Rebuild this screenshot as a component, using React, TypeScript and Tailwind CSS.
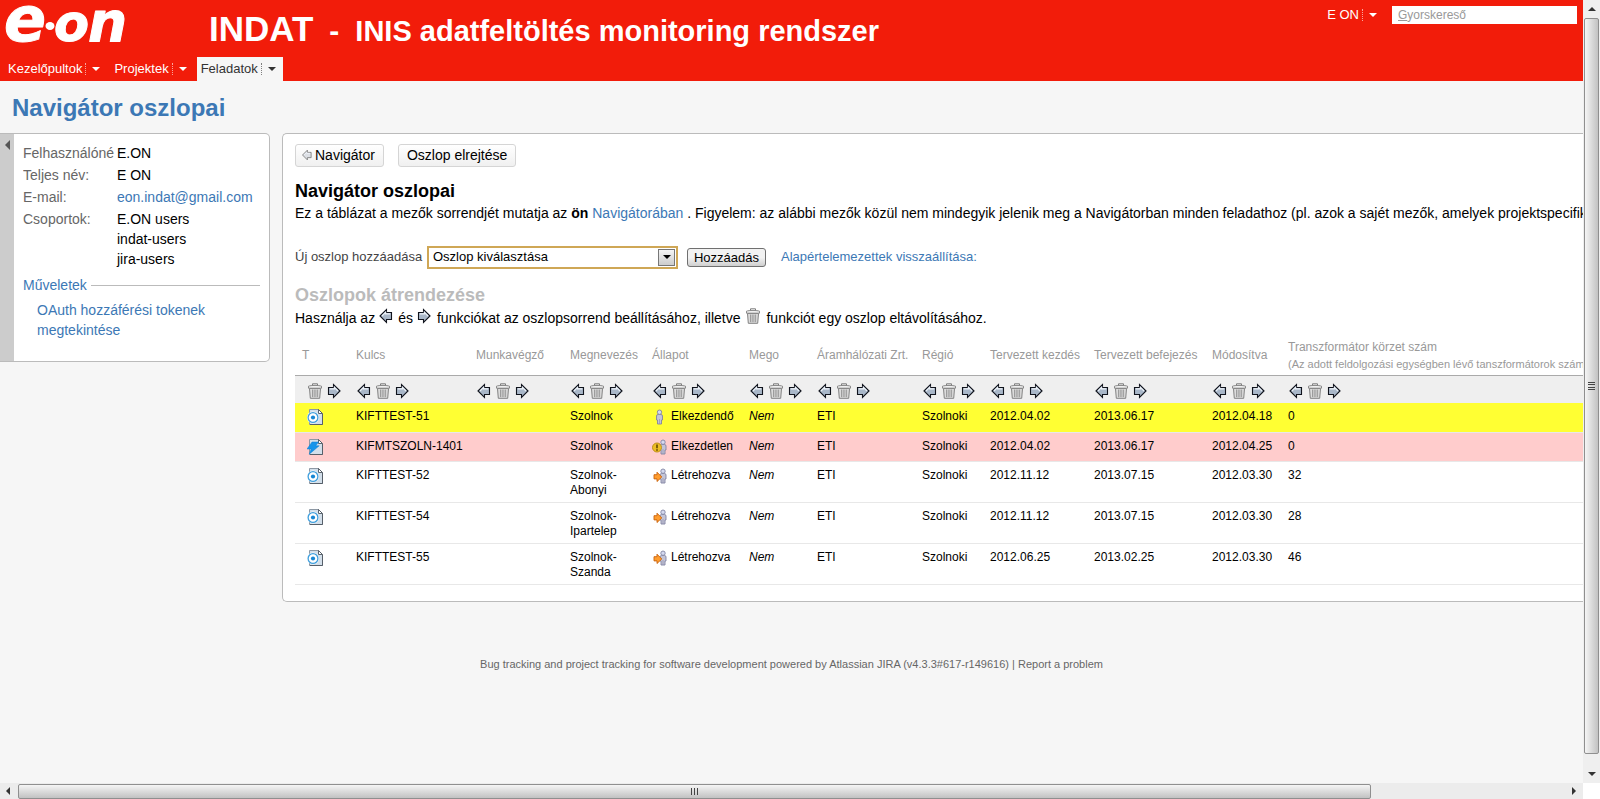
import type { ReactNode } from 'react';

interface Issue {
  key: string;
  type: 'task' | 'fault';
  name: string[];
  status: 'person' | 'warning' | 'created';
  statusLabel: string;
  start: string;
  end: string;
  modified: string;
  zones: number;
  rowClass: string;
}

const issues: Issue[] = [
  { key: 'KIFTTEST-51', type: 'task', name: ['Szolnok'], status: 'person', statusLabel: 'Elkezdendő', start: '2012.04.02', end: '2013.06.17', modified: '2012.04.18', zones: 0, rowClass: 'bg-[#ffff33]' },
  { key: 'KIFMTSZOLN-1401', type: 'fault', name: ['Szolnok'], status: 'warning', statusLabel: 'Elkezdetlen', start: '2012.04.02', end: '2013.06.17', modified: '2012.04.25', zones: 0, rowClass: 'bg-[#ffcccc]' },
  { key: 'KIFTTEST-52', type: 'task', name: ['Szolnok-', 'Abonyi'], status: 'created', statusLabel: 'Létrehozva', start: '2012.11.12', end: '2013.07.15', modified: '2012.03.30', zones: 32, rowClass: '' },
  { key: 'KIFTTEST-54', type: 'task', name: ['Szolnok-', 'Ipartelep'], status: 'created', statusLabel: 'Létrehozva', start: '2012.11.12', end: '2013.07.15', modified: '2012.03.30', zones: 28, rowClass: '' },
  { key: 'KIFTTEST-55', type: 'task', name: ['Szolnok-', 'Szanda'], status: 'created', statusLabel: 'Létrehozva', start: '2012.06.25', end: '2013.02.25', modified: '2012.03.30', zones: 46, rowClass: '' },
];

const columns = [
  { label: 'T', width: 'w-[54px]' },
  { label: 'Kulcs', width: 'w-[120px]' },
  { label: 'Munkavégző', width: 'w-[94px]' },
  { label: 'Megnevezés', width: 'w-[82px]' },
  { label: 'Állapot', width: 'w-[97px]' },
  { label: 'Mego', width: 'w-[68px]' },
  { label: 'Áramhálózati Zrt.', width: 'w-[105px]' },
  { label: 'Régió', width: 'w-[68px]' },
  { label: 'Tervezett kezdés', width: 'w-[104px]' },
  { label: 'Tervezett befejezés', width: 'w-[118px]' },
  { label: 'Módosítva', width: 'w-[76px]' },
  { label: 'Transzformátor körzet szám', width: '', note: '(Az adott feldolgozási egységben lévő tanszformátorok száma)' },
];

function ArrowIcon({ right = false, muted = false }: { right?: boolean; muted?: boolean }) {
  return (
    <svg viewBox="0 0 16 16" className={right ? 'inline-block size-4 -scale-x-100' : 'inline-block size-4'}>
      <path
        d="M2 8 8.5 1.5v3h5v7h-5v3Z"
        fill={muted ? '#dcdfe4' : '#a9b7c8'}
        stroke={muted ? '#777' : '#10131c'}
        strokeWidth="1.1"
      />
      <path d="M4 8 7.6 4.4v1.4h4.6" fill="none" stroke="#edf2f8" strokeWidth="1.2" />
    </svg>
  );
}

function TrashIcon() {
  return (
    <svg viewBox="0 0 16 16" className="inline-block size-4">
      <path d="M2.5 5.5h11l-.8 9.8H3.3Z" fill="#dcdcdc" stroke="#828282" />
      <path d="M5.5 6.5v7.6M7.2 6.5v7.6M8.9 6.5v7.6M10.6 6.5v7.6" stroke="#8c8c8c" strokeWidth=".8" />
      <path d="M1.5 3.2c2-1 11-1 13 0v2h-13Z" fill="#f0f0f0" stroke="#7d7d7d" strokeWidth=".9" />
      <path d="M5.5 2.3V.8h5v1.5" fill="none" stroke="#7d7d7d" />
    </svg>
  );
}

function TypeIcon({ type }: { type: Issue['type'] }) {
  return (
    <svg viewBox="0 0 16 16" className="block size-4">
      <path d="M2.5.5h9l4 4v11h-13Z" fill="#d3dfea" stroke="#8d98a4" />
      <path d="M11.5.5v4h4Z" fill="#fff" stroke="#4b545e" strokeWidth=".9" />
      <path d="M15.5 5v10.5H3" fill="none" stroke="#565f69" />
      {type === 'task' ? (
        <>
          <circle cx="6" cy="8.5" r="6" fill="#fff" />
          <circle cx="6" cy="8.5" r="4.9" fill="#fff" stroke="#3f9fdd" strokeWidth="1.3" />
          <circle cx="6" cy="8.5" r="2.1" fill="#1787d4" />
        </>
      ) : (
        <path d="M5 3h6.5L8.8 6.8h3.4L2.2 15.2l2-5.2H0Z" fill="#1594ea" stroke="#0f7fd4" strokeWidth=".5" />
      )}
    </svg>
  );
}

function StatusIcon({ status }: { status: Issue['status'] }) {
  const x = status === 'person' ? 7.5 : 11;
  return (
    <svg viewBox="0 0 16 16" className="size-4 shrink-0">
      <g fill="#c3c4d6" stroke="#8184a3" strokeWidth=".9">
        <path d={`M${x - 3} 7q0-1.5 1.5-1.5h3q1.5 0 1.5 1.5v4h-1v4h-4v-4h-1Z`} />
        <circle cx={x} cy="3.2" r="2.2" fill="#d5daf0" />
      </g>
      <path d={`M${x} 10v5`} stroke="#9295b0" strokeWidth=".7" />
      {status === 'warning' && (
        <>
          <circle cx="5" cy="8.5" r="4.5" fill="#edbd25" stroke="#b98a12" strokeWidth=".9" />
          <path d="M5 5.5v3.8M5 10.3v1.4" stroke="#5a3f00" strokeWidth="1.5" />
        </>
      )}
      {status === 'created' && (
        <path d="M2 6.7h3V4.2L9.8 9 5 13.5v-2.6H2Z" fill="#ff9d2e" stroke="#c8620c" strokeWidth=".9" />
      )}
    </svg>
  );
}

function Caret({ className = '' }: { className?: string }) {
  return (
    <svg viewBox="0 0 8 4" className={`h-1 w-2 ${className}`}>
      <path d="M0 0h8L4 4Z" fill="currentColor" />
    </svg>
  );
}

function MenuButton({ label, active = false }: { label: string; active?: boolean }) {
  return (
    <button
      className={
        active
          ? 'flex h-6 items-center bg-[#f6f6f6] pr-[7px] pl-1 text-[#333]'
          : 'flex h-6 items-center pr-[7px] pl-1 text-white'
      }
    >
      {label}
      <span className="ml-[3px] h-3 border-l border-dotted border-current opacity-60" />
      <Caret className="ml-[6px]" />
    </button>
  );
}

function Logo() {
  return (
    <svg viewBox="0 0 132 46" className="h-[46px] w-[132px] overflow-visible" role="img" aria-label="e.on">
      <g fill="#fff" stroke="#fff" strokeWidth="1" strokeLinejoin="round" fontFamily="DejaVu Sans, sans-serif" fontWeight="700" fontStyle="italic">
        <text x="4" y="41" fontSize="62">e</text>
        <text x="54" y="41" fontSize="51">o</text>
        <text x="88" y="41" fontSize="55">n</text>
      </g>
      <ellipse cx="50" cy="26" rx="4.5" ry="4" fill="#fff" />
    </svg>
  );
}

function ColumnControls({ first }: { first: boolean }) {
  return (
    <div className={first ? 'flex gap-[3px] pl-[5px]' : 'flex gap-[3px]'}>
      {!first && (
        <button aria-label="Balra" className="size-4"><ArrowIcon /></button>
      )}
      <button aria-label="Eltávolítás" className="size-4"><TrashIcon /></button>
      <button aria-label="Jobbra" className="size-4"><ArrowIcon right /></button>
    </div>
  );
}

function Header() {
  return (
    <header className="flex h-[81px] flex-col justify-between bg-[#f21c0a] text-[13px]">
      <div className="flex items-start">
        <a href="#" className="w-[209px] shrink-0"><Logo /></a>
        <div className="flex items-baseline pt-2 font-bold whitespace-pre text-white">
          <span className="text-[35px] leading-[40px]">INDAT</span>
          <span className="w-[42px] text-center text-[30px]">-</span>
          <span className="text-[29px]">INIS adatfeltöltés monitoring rendszer</span>
        </div>
        <div className="ml-auto flex items-center gap-2 pt-[6px] pr-[6px]">
          <div className="flex h-[18px] items-center"><MenuButton label="E ON" /></div>
          <label className="relative block">
            <input
              type="text"
              aria-label="Gyorskereső"
              placeholder=" "
              className="peer block h-[18px] w-[185px] bg-white px-[6px] text-[12px] text-black outline-none"
            />
            <span className="pointer-events-none absolute top-0 left-[6px] hidden text-[12px] leading-[18px] text-[#999] peer-placeholder-shown:block">
              <u>G</u>yorskereső
            </span>
          </label>
        </div>
      </div>
      <nav className="flex gap-[3px] pl-1">
        <MenuButton label="Kezelőpultok" />
        <MenuButton label="Projektek" />
        <MenuButton label="Feladatok" active />
      </nav>
    </header>
  );
}

function Detail({ label, children }: { label: string; children: ReactNode }) {
  return (
    <div className="mb-[2px] flex leading-5">
      <dt className="w-[94px] shrink-0 overflow-hidden whitespace-nowrap text-[#666]">{label}</dt>
      <dd className="whitespace-nowrap">{children}</dd>
    </div>
  );
}

function Sidebar() {
  return (
    <aside className="flex h-[229px] w-[270px] shrink-0 overflow-hidden rounded-r-[5px] border border-l-0 border-[#bbb] bg-white">
      <button aria-label="Panel elrejtése" className="flex w-[14px] shrink-0 justify-center bg-[#ccc] pt-[6px]">
        <svg viewBox="0 0 5 10" className="h-[10px] w-[5px]"><path d="M5 0v10L0 5Z" fill="#555" /></svg>
      </button>
      <div className="flex-1 pt-[9px] pr-[9px] pl-[9px] text-sm">
        <dl>
          <Detail label="Felhasználóné">E.ON</Detail>
          <Detail label="Teljes név:">E ON</Detail>
          <Detail label="E-mail:">
            <a href="mailto:eon.indat@gmail.com" className="text-[#3c78b5]">eon.indat@gmail.com</a>
          </Detail>
          <Detail label="Csoportok:">
            <div>E.ON users</div>
            <div>indat-users</div>
            <div>jira-users</div>
          </Detail>
        </dl>
        <h3 className="mt-[6px] flex items-center gap-1 leading-5 text-[#3c78b5] after:h-px after:flex-1 after:bg-[#bbb]">
          Műveletek
        </h3>
        <a href="#" className="mt-[5px] ml-[14px] block leading-5 text-[#3c78b5]">
          OAuth hozzáférési tokenek megtekintése
        </a>
      </div>
    </aside>
  );
}

function ColumnTable() {
  return (
    <table className="mt-[6px] w-[1400px] table-fixed border-collapse text-left text-xs">
      <colgroup>
        {columns.map((c) => (
          <col key={c.label} className={c.width} />
        ))}
      </colgroup>
      <thead>
        <tr className="h-10 border-b border-[#aaa] text-[#999]">
          {columns.map((c) => (
            <th key={c.label} className="px-[7px] font-normal whitespace-nowrap">
              {c.label}
              {c.note && <div className="mt-[2px] text-[11px] leading-[14px]">{c.note}</div>}
            </th>
          ))}
        </tr>
        <tr className="h-7 bg-[#efefef]">
          {columns.map((c, i) => (
            <td key={c.label} className="pt-px pl-[7px]">
              <ColumnControls first={i === 0} />
            </td>
          ))}
        </tr>
      </thead>
      <tbody className="leading-[15px] [&_td]:px-[7px] [&_td]:pt-[6px] [&_td]:pb-1 [&_td]:align-top">
        {issues.map((issue) => (
          <tr key={issue.key} className={`h-[29px] border-b border-[#e8e8e8] ${issue.rowClass}`}>
            <td><div className="pl-[5px]"><TypeIcon type={issue.type} /></div></td>
            <td>{issue.key}</td>
            <td />
            <td>
              {issue.name.map((part) => (
                <div key={part}>{part}</div>
              ))}
            </td>
            <td>
              <div className="flex gap-[3px]">
                <StatusIcon status={issue.status} />
                {issue.statusLabel}
              </div>
            </td>
            <td><em>Nem</em></td>
            <td>ETI</td>
            <td>Szolnoki</td>
            <td>{issue.start}</td>
            <td>{issue.end}</td>
            <td>{issue.modified}</td>
            <td>{issue.zones}</td>
          </tr>
        ))}
      </tbody>
    </table>
  );
}

function MainPanel() {
  const toolButton = 'flex h-[23px] items-center rounded-[3px] border border-[#d5d5d5] bg-linear-to-b from-white to-[#f0f0f0] pb-px';
  return (
    <section className="min-w-0 flex-1 overflow-hidden rounded-l-[5px] border border-r-0 border-[#bbb] bg-white pt-[10px] pb-4 pl-3 text-sm whitespace-nowrap">
      <div className="flex gap-[14px]">
        <button className={`${toolButton} pr-2 pl-[5px]`}>
          <span className="mr-[2px] flex [&>svg]:size-3"><ArrowIcon muted /></span>
          Navigátor
        </button>
        <button className={`${toolButton} px-2`}>Oszlop elrejtése</button>
      </div>
      <h2 className="mt-3 text-lg leading-6 font-bold">Navigátor oszlopai</h2>
      <p className="leading-5">
        Ez a táblázat a mezők sorrendjét mutatja az <b>ön</b>{' '}
        <a href="#" className="text-[#3c78b5]">Navigátorában</a> . Figyelem: az alábbi mezők közül nem mindegyik
        jelenik meg a Navigátorban minden feladathoz (pl. azok a sajét mezők, amelyek projektspecifikusak).
      </p>
      <form className="mt-[22px] flex h-6 items-center text-[13px]" onSubmit={(e) => e.preventDefault()}>
        <label htmlFor="column" className="w-[132px] text-[#444]">Új oszlop hozzáadása</label>
        <div className="relative">
          <select id="column" className="block h-[23px] w-[251px] appearance-none border-2 border-[#cfa756] bg-white pl-1 text-[13px] outline-none">
            <option>Oszlop kiválasztása</option>
          </select>
          <span className="pointer-events-none absolute top-[3px] right-[3px] flex h-[17px] w-[17px] items-center justify-center border border-[#777] bg-linear-to-b from-[#f4f4f4] to-[#ccc]">
            <Caret />
          </span>
        </div>
        <button className="ml-[9px] h-[19px] w-[79px] rounded-[3px] border border-[#707070] bg-linear-to-b from-[#f2f2f2] from-50% to-[#cfcfcf] leading-[17px]">
          Hozzáadás
        </button>
        <a href="#" className="ml-[15px] text-[#3c78b5]">Alapértelemezettek visszaállítása:</a>
      </form>
      <h2 className="mt-[14px] text-lg leading-6 font-bold text-[#bbb]">Oszlopok átrendezése</h2>
      <p className="flex items-center leading-[22px]">
        Használja az
        <span className="mr-1 mb-1 ml-[3px] flex"><ArrowIcon /></span>
        és
        <span className="mr-[5px] mb-1 ml-[3px] flex"><ArrowIcon right /></span>
        funkciókat az oszlopsorrend beállításához, illetve
        <span className="mx-[5px] mb-1 flex"><TrashIcon /></span>
        funkciót egy oszlop eltávolításához.
      </p>
      <ColumnTable />
    </section>
  );
}

function ScrollArrow({ d }: { d: string }) {
  return (
    <svg viewBox="0 0 8 8" className="size-2 shrink-0"><path d={d} fill="#333" /></svg>
  );
}

function VerticalScrollbar() {
  return (
    <div className="flex flex-col items-center bg-[#efefef] pt-[5px] pb-[5px]">
      <ScrollArrow d="M0 6h8L4 2Z" />
      <div className="mt-[5px] mb-4 flex w-[15px] flex-1 items-center justify-center rounded-[2px] border border-[#8f8f8f] bg-linear-to-r from-[#f5f5f5] to-[#c2c2c2]">
        <div className="flex h-[9px] w-[7px] flex-col justify-between *:h-px *:bg-[#444]"><i /><i /><i /><i /></div>
      </div>
      <ScrollArrow d="M0 2h8L4 6Z" />
    </div>
  );
}

function HorizontalScrollbar() {
  return (
    <div className="flex items-center bg-[#ececec] pr-[5px] pl-1">
      <ScrollArrow d="M6 0v8L2 4Z" />
      <div className="mx-[6px] flex flex-1">
        <div className="flex h-[15px] w-[87.5%] items-center justify-center rounded-[2px] border border-[#8f8f8f] bg-linear-to-b from-[#f5f5f5] to-[#c2c2c2]">
          <div className="flex h-[7px] w-[7px] justify-between *:w-px *:bg-[#444]"><i /><i /><i /></div>
        </div>
      </div>
      <ScrollArrow d="M2 0v8L6 4Z" />
    </div>
  );
}

export default function App() {
  return (
    <div className="grid h-screen grid-cols-[minmax(0,1fr)_17px] grid-rows-[minmax(0,1fr)_16px] overflow-hidden bg-white font-['Liberation_Sans',Arial,sans-serif] text-black">
      <div className="overflow-hidden bg-[#f6f6f6]">
        <Header />
        <h1 className="pt-[13px] pb-[11px] pl-3 text-2xl leading-7 font-bold text-[#3c78b5]">Navigátor oszlopai</h1>
        <main className="flex items-start gap-3">
          <Sidebar />
          <MainPanel />
        </main>
        <footer className="pt-[54px] text-center text-[11px] leading-4 text-[#666]">
          Bug tracking and project tracking for software development powered by{' '}
          <a href="#">Atlassian JIRA</a> (v4.3.3#617-r149616) | <a href="#">Report a problem</a>
        </footer>
      </div>
      <VerticalScrollbar />
      <HorizontalScrollbar />
    </div>
  );
}
